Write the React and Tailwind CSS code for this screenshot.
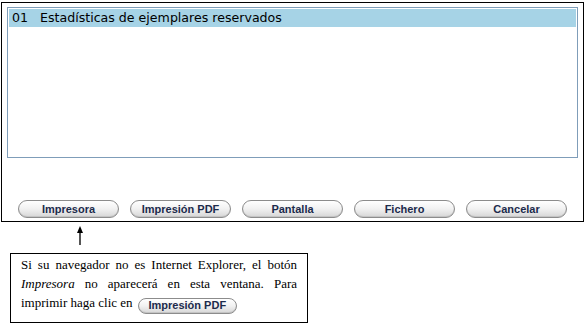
import React from 'react';

const buttons = ['Impresora', 'Impresión PDF', 'Pantalla', 'Fichero', 'Cancelar'];

function PillButton({ label, className = '' }) {
  return (
    <button
      className={`rounded-full border border-[#8c8c8c] bg-gradient-to-b from-white via-[#f1f1f1] to-[#d6d6d6] text-[11px] font-bold leading-none text-[#1c2b4c] shadow-[inset_0_-1px_0_#c4c4c4] ${className}`}
      style={{ fontFamily: '"Liberation Sans", Arial, sans-serif' }}
    >
      {label}
    </button>
  );
}

export default function App() {
  return (
    <div className="w-[587px] h-[329px] bg-white relative">
      {/* main panel */}
      <div className="ml-[1px] pt-[2px]">
        <div className="w-[583px] h-[220px] border border-black flex flex-col">
          <div className="mx-[5px] mt-[4px] h-[151px] border border-[#7f9db9] p-[1px]">
            <div
              className="h-[18px] bg-[#a6d3e6] flex items-center pl-[3px] text-[12.6px] text-black"
              style={{ fontFamily: '"DejaVu Sans", Verdana, sans-serif' }}
            >
              <span className="w-[28px]">01</span>
              <span>Estadísticas de ejemplares reservados</span>
            </div>
          </div>
          <div className="flex gap-[11px] pl-[16px] mt-[42px]">
            {buttons.map((b) => (
              <PillButton key={b} label={b} className="w-[101px] h-[18px]" />
            ))}
          </div>
        </div>
      </div>

      {/* arrow */}
      <div className="ml-[76px] mt-[4px] w-[7px] h-[19px] flex flex-col items-center">
        <div className="w-0 h-0 border-l-[3.5px] border-r-[3.5px] border-b-[7px] border-l-transparent border-r-transparent border-b-black" />
        <div className="w-[2px] h-[12px] bg-[#555]" />
      </div>

      {/* note */}
      <div
        className="ml-[10px] mt-[8px] w-[298px] h-[70px] border border-black px-[10px] pt-[1px] text-[13px] leading-[19px] text-black text-justify"
        style={{ fontFamily: '"Liberation Serif", "Times New Roman", serif' }}
      >
        Si su navegador no es Internet Explorer, el botón <i>Impresora</i> no aparecerá en esta ventana. Para
        imprimir haga clic en{' '}
        <PillButton label="Impresión PDF" className="w-[99px] h-[16px] align-[-2px] ml-[2px]" />
      </div>
    </div>
  );
}
